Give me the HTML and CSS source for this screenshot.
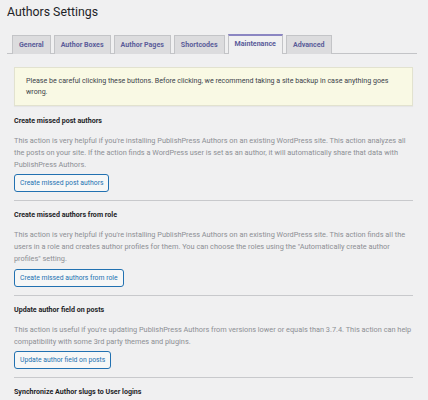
FILE: index.html
```html
<!DOCTYPE html>
<html>
<head>
<meta charset="utf-8">
<link rel="stylesheet" href="styles.css">
</head>
<body>
<div class="wrap">
  <h1 class="title">Authors Settings</h1>
  <nav class="tabs">
    <span class="tab">General</span>
    <span class="tab">Author Boxes</span>
    <span class="tab">Author Pages</span>
    <span class="tab">Shortcodes</span>
    <span class="tab active">Maintenance</span>
    <span class="tab">Advanced</span>
  </nav>
  <div class="content">
    <div class="notice">Please be careful clicking these buttons. Before clicking, we recommend taking a site backup in case anything goes wrong.</div>
    <section class="action">
      <h2 class="action-title">Create missed post authors</h2>
      <p class="action-desc">This action is very helpful if you're installing PublishPress Authors on an existing WordPress site. This action analyzes all the posts on your site. If the action finds a WordPress user is set as an author, it will automatically share that data with PublishPress Authors.</p>
      <button class="btn">Create missed post authors</button>
    </section>
    <section class="action">
      <h2 class="action-title">Create missed authors from role</h2>
      <p class="action-desc">This action is very helpful if you're installing PublishPress Authors on an existing WordPress site. This action finds all the users in a role and creates author profiles for them. You can choose the roles using the "Automatically create author profiles" setting.</p>
      <button class="btn">Create missed authors from role</button>
    </section>
    <section class="action">
      <h2 class="action-title">Update author field on posts</h2>
      <p class="action-desc">This action is useful if you're updating PublishPress Authors from versions lower or equals than 3.7.4. This action can help compatibility with some 3rd party themes and plugins.</p>
      <button class="btn">Update author field on posts</button>
    </section>
    <section class="action last">
      <h2 class="action-title">Synchronize Author slugs to User logins</h2>
    </section>
  </div>
</div>
</body>
</html>
```

FILE: styles.css
```css
html, body {
  margin: 0;
  padding: 0;
  background: #f0f0f1;
  font-family: Roboto, "Liberation Sans", Arial, sans-serif;
  color: #1d2327;
  overflow: hidden;
}

.wrap {
  padding: 4px 11px 0 7px;
}

.title {
  margin: 0;
  font-size: 12.3px;
  font-weight: 400;
  line-height: 17px;
  color: #1d2327;
}

.tabs {
  display: flex;
  gap: 3px;
  margin-top: 14px;
  padding-left: 5px;
  border-bottom: 1px solid #c3c4c7;
  height: 18px;
}

.tab {
  box-sizing: border-box;
  height: 19px;
  padding: 0 6px;
  border: 1px solid #c3c4c7;
  border-bottom: none;
  background: #dcdcde;
  color: #5b5c9a;
  font-size: 7.1px;
  font-weight: 700;
  line-height: 17px;
  white-space: nowrap;
}

.tab.active {
  background: #f0f0f1;
  border-top: 2px solid #8b86c2;
  line-height: 16px;
  height: 20px;
  margin-top: -1px;
}

.content {
  padding: 0 4px 0 7px;
}

.notice {
  margin-top: 13px;
  padding: 8px 10px 8px 11px;
  background: #f9f9e4;
  border: 1px solid #e2e2cf;
  box-shadow: 0 1px 1px rgba(0,0,0,0.04);
  font-size: 7.1px;
  line-height: 10.5px;
  color: #3c434a;
}

.action {
  border-bottom: 1px solid #c8c9cc;
  padding-bottom: 8px;
}

.action.last {
  border-bottom: none;
}

.action-title {
  margin: 9px 0 0;
  font-size: 7.1px;
  line-height: 10px;
  font-weight: 700;
  color: #1d2327;
}

.notice + .action .action-title {
  margin-top: 10px;
}

.action-desc {
  margin: 9px 0 0;
  font-size: 7.35px;
  line-height: 11.8px;
  color: #8c8f94;
}

.btn {
  display: block;
  margin-top: 4px;
  height: 18px;
  padding: 0 5px;
  border: 1px solid #2271b1;
  border-radius: 3px;
  background: #f6f7f7;
  color: #2271b1;
  font-family: Roboto, "Liberation Sans", Arial, sans-serif;
  font-size: 6.8px;
  line-height: 16px;
}
```
